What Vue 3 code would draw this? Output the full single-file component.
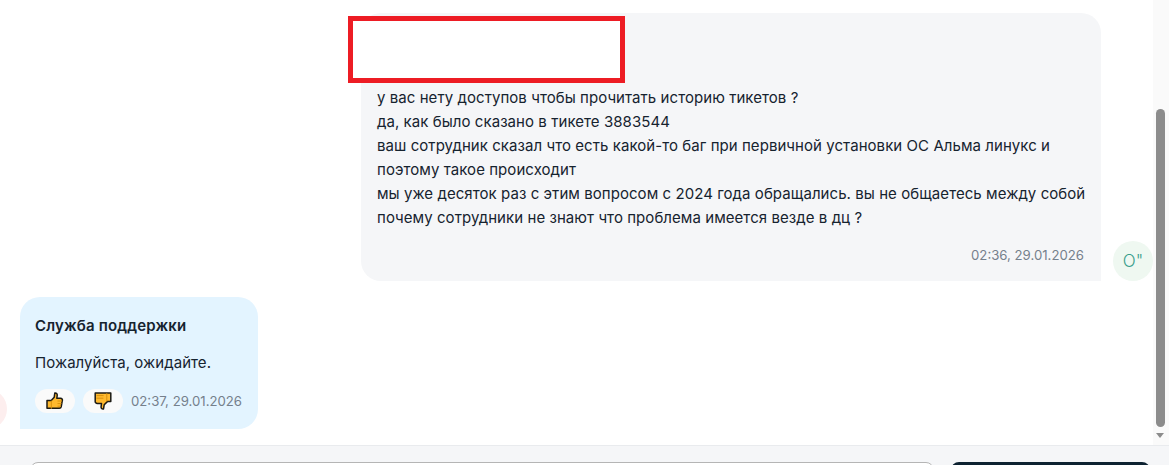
<script setup>
const userLines = [
  'у вас нету доступов чтобы прочитать историю тикетов ?',
  'да, как было сказано в тикете 3883544',
  'ваш сотрудник сказал что есть какой-то баг при первичной установки ОС Альма линукс и поэтому такое происходит',
  'мы уже десяток раз с этим вопросом с 2024 года обращались. вы не общаетесь между собой почему сотрудники не знают что проблема имеется везде в дц ?'
]
</script>

<template>
  <div class="page">
    <div class="main">
      <div class="chat">
        <div class="row row-user">
          <div class="bubble bubble-user">
            <div class="redacted"></div>
            <p v-for="line in userLines" :key="line" class="line">{{ line }}</p>
            <div class="time time-user">02:36, 29.01.2026</div>
          </div>
          <div class="avatar avatar-user">O"</div>
        </div>
        <div class="row row-support">
          <div class="avatar avatar-support"></div>
          <div class="bubble bubble-support">
            <div class="name">Служба поддержки</div>
            <p class="line answer">Пожалуйста, ожидайте.</p>
            <div class="meta">
              <button class="rate">
                <svg width="18" height="18" viewBox="0 0 18 18">
                  <path class="thumb" d="M1 8.5h4.2l3-3.2.6-4.3c1.6-.3 2.6.8 2.4 2.5l-.4 2.8h3.7c1.4 0 2.2 1.2 1.8 2.4l-1.1 6.1c-.2.9-.9 1.4-1.8 1.4H1z" />
                  <path class="thumb-line" d="M5.3 8.6v8.2M11.5 9h4.3M11.5 11.6h4M11.5 14.2h3.5" />
                </svg>
              </button>
              <button class="rate">
                <svg width="18" height="18" viewBox="0 0 18 18">
                  <path class="thumb" d="M1.2 1h15.6v8.6h-3.4l-3.2 3.2-.7 4.2c-1.6.3-2.6-.7-2.4-2.4l.4-3.2H3.4c-1.4 0-2.4-1-2.2-2.3z" />
                  <path class="thumb-line" d="M12.8 1.2v8.2M2.6 3.6h7M2.4 6.2h7" />
                </svg>
              </button>
              <div class="time">02:37, 29.01.2026</div>
            </div>
          </div>
        </div>
      </div>
      <div class="scrollbar">
        <div class="scroll-thumb"></div>
        <div class="scroll-arrow"></div>
      </div>
    </div>
    <div class="footer">
      <div class="input"></div>
      <div class="send"></div>
    </div>
  </div>
</template>

<style scoped>
.page {
  width: 1169px;
  height: 465px;
  display: flex;
  flex-direction: column;
  overflow: hidden;
  background: #fff;
  font-family: Inter, "Noto Sans", sans-serif;
  color: #16232f;
}
.main {
  height: 445px;
  display: flex;
}
.chat {
  flex: 1;
  padding-top: 13px;
  display: flex;
  flex-direction: column;
  gap: 16px;
  overflow: hidden;
}
.row {
  display: flex;
  align-items: flex-end;
  gap: 12px;
}
.row-user {
  justify-content: flex-end;
}
.row-support {
  margin-left: -33px;
  gap: 13px;
}
.bubble {
  box-sizing: border-box;
  border-radius: 20px;
}
.bubble-user {
  position: relative;
  width: 740px;
  height: 268px;
  padding: 73px 8px 0 16px;
  background: #f5f6f8;
  border-bottom-right-radius: 0;
}
.redacted {
  position: absolute;
  left: -13px;
  top: 3px;
  width: 277px;
  height: 67px;
  box-sizing: border-box;
  border: 5px solid #ed1c24;
  background: #fff;
}
.line {
  margin: 0;
  font-size: 15px;
  line-height: 24px;
  letter-spacing: 0.06px;
}
.time {
  font-size: 13.2px;
  line-height: 20px;
  color: #75808c;
  white-space: nowrap;
}
.time-user {
  margin-top: 15px;
  margin-right: 9px;
  text-align: right;
}
.avatar {
  flex: none;
  width: 40px;
  height: 40px;
  border-radius: 50%;
  display: flex;
  align-items: center;
  justify-content: center;
}
.avatar-user {
  background: #eff8f1;
  color: #3a9e8c;
  font-size: 17px;
  font-weight: 300;
}
.avatar-support {
  background: #fdeeee;
}
.bubble-support {
  width: 238px;
  height: 132px;
  padding: 19px 16px 0 15px;
  background: #e3f4ff;
  border-bottom-left-radius: 0;
}
.name {
  font-size: 15px;
  line-height: 20px;
  font-weight: 600;
  letter-spacing: 0.15px;
}
.answer {
  margin-top: 15px;
}
.meta {
  margin-top: 14px;
  display: flex;
  align-items: center;
  gap: 8px;
}
.rate {
  flex: none;
  width: 40px;
  height: 24px;
  padding: 0;
  border: none;
  border-radius: 12px;
  background: #fafafa;
  display: flex;
  align-items: center;
  justify-content: center;
}
.thumb {
  fill: #ffb92e;
  stroke: #1c1a14;
  stroke-width: 1.5;
  stroke-linejoin: round;
}
.thumb-line {
  fill: none;
  stroke: #d9920f;
  stroke-width: 1;
}
.scrollbar {
  flex: none;
  width: 16px;
  background: #fafafa;
  position: relative;
}
.scroll-thumb {
  position: absolute;
  left: 3px;
  top: 109px;
  width: 9px;
  height: 318px;
  border-radius: 5px;
  background: #8c8c8c;
}
.scroll-arrow {
  position: absolute;
  left: 3px;
  top: 433px;
  border-left: 4.5px solid transparent;
  border-right: 4.5px solid transparent;
  border-top: 5px solid #8c8c8c;
}
.footer {
  flex: 1;
  display: flex;
  gap: 17px;
  padding: 16px 19px 0 30px;
  background: #f5f6f8;
  border-top: 1px solid #e9ebee;
  overflow: hidden;
}
.input {
  width: 904px;
  height: 40px;
  box-sizing: border-box;
  flex: none;
  border: 1px solid #b5b5b5;
  border-radius: 8px;
  background: #fff;
}
.send {
  width: 199px;
  height: 40px;
  flex: none;
  border-radius: 8px;
  background: #0d2231;
}
</style>
